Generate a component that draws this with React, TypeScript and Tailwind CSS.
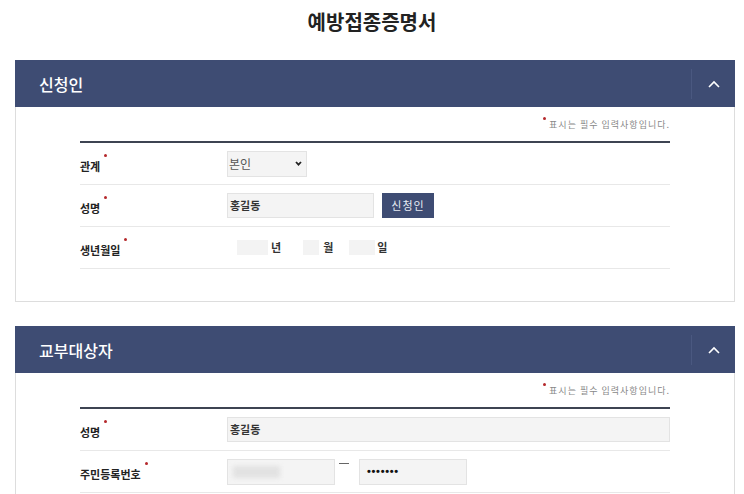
import type { ReactNode } from "react";

const font = { fontFamily: '"Noto Sans CJK KR", "Noto Sans", sans-serif' };

function ChevronUp() {
  return (
    <svg width="12" height="8" viewBox="0 0 12 8" fill="none">
      <path d="M1 7 L6 2 L11 7" stroke="#ffffff" strokeWidth="1.6" />
    </svg>
  );
}

function Required() {
  return <span className="absolute -right-[7px] -top-[4px] h-[3px] w-[3px] rounded-full bg-[#b5282b]" />;
}

function Label({ children }: { children: ReactNode }) {
  return (
    <div className="w-[147px] shrink-0">
      <span className="relative text-[11px] font-bold leading-none text-[#222]">
        {children}
        <Required />
      </span>
    </div>
  );
}

function Row({ label, children }: { label: string; children: ReactNode }) {
  return (
    <div className="flex h-[42px] items-center border-b border-[#e8e8e8]">
      <Label>{label}</Label>
      <div className="flex items-center">{children}</div>
    </div>
  );
}

function Panel({ title, children, className = "" }: { title: string; children: ReactNode; className?: string }) {
  return (
    <section className={`ml-[15px] w-[720px] ${className}`}>
      {/* Header */}
      <div className="flex h-[47px] items-center justify-between bg-[#3e4c73]">
        <h2 className="pl-[24px] text-[16px] font-medium leading-none text-white">{title}</h2>
        <button className="flex h-[30px] w-[44px] items-center justify-center border-l border-[#4a5880]">
          <ChevronUp />
        </button>
      </div>
      {/* Body */}
      <div className="border border-t-0 border-[#dddddd]">
        <div className="ml-[64px] w-[590px]">
          <div className="flex h-[34px] items-center justify-end">
            <span className="relative text-[9px] leading-none tracking-[1px] text-[#888]">
              <span className="absolute -left-[6px] -top-[3px] h-[3px] w-[3px] rounded-full bg-[#b5282b]" />
              표시는 필수 입력사항입니다.
            </span>
          </div>
          <div className="h-[2px] bg-[#3d4452]" />
          {children}
        </div>
      </div>
    </section>
  );
}

export default function App() {
  return (
    <div className="h-[494px] w-[744px] overflow-hidden bg-white" style={font}>
      <div className="flex h-[60px] justify-center">
        <h1 className="text-[20px] font-bold leading-[44px] text-[#222]">예방접종증명서</h1>
      </div>

      <Panel title="신청인">
        <Row label="관계">
          <div className="flex h-[26px] w-[80px] items-center justify-between border border-[#e3e3e3] bg-[#f4f4f4] pl-[1px] pr-[4px]">
            <span className="text-[12px] leading-none text-[#555]">본인</span>
            <svg width="7" height="5" viewBox="0 0 7 5" fill="none">
              <path d="M1 1 L3.5 3.6 L6 1" stroke="#222" strokeWidth="1.8" />
            </svg>
          </div>
        </Row>
        <Row label="성명">
          <div className="flex h-[25px] w-[147px] items-center border border-[#e3e3e3] bg-[#f4f4f4] pl-[2px]">
            <span className="text-[11px] font-bold leading-none text-[#333]">홍길동</span>
          </div>
          <button className="ml-[8px] h-[25px] w-[52px] bg-[#3e4c73] text-[11px] leading-none tracking-[1px] text-[#e8ebf3]">
            신청인
          </button>
        </Row>
        <Row label="생년월일">
          <div className="ml-[10px] h-[15px] w-[31px] bg-[#f3f3f3]" />
          <span className="ml-[3px] text-[11px] font-bold leading-none text-[#333]">년</span>
          <div className="ml-[22px] h-[15px] w-[16px] bg-[#f3f3f3]" />
          <span className="ml-[4px] text-[11px] font-bold leading-none text-[#333]">월</span>
          <div className="ml-[16px] h-[15px] w-[26px] bg-[#f3f3f3]" />
          <span className="ml-[2px] text-[11px] font-bold leading-none text-[#333]">일</span>
        </Row>
        <div className="h-[32px]" />
      </Panel>

      <Panel title="교부대상자" className="mt-[24px]">
        <Row label="성명">
          <div className="flex h-[25px] w-[443px] items-center border border-[#e3e3e3] bg-[#f4f4f4] pl-[2px]">
            <span className="text-[11px] font-bold leading-none text-[#333]">홍길동</span>
          </div>
        </Row>
        <Row label="주민등록번호">
          <div className="flex h-[26px] w-[108px] items-center border border-[#e3e3e3] bg-[#f4f4f4] pl-[5px]">
            <div className="h-[12px] w-[47px] bg-[#e2e2e2] blur-[2px]" />
          </div>
          <div className="flex h-[26px] items-start px-[4px] pt-[4px]">
            <span className="block h-[1px] w-[10px] bg-[#666]" />
          </div>
          <div className="ml-[6px] flex h-[26px] w-[108px] items-center border border-[#e3e3e3] bg-[#f4f4f4] pl-[7px]">
            <span
              className="text-[11px] font-bold leading-none tracking-[0.7px] text-[#111]"
              style={{ fontFamily: '"Liberation Sans", sans-serif' }}
            >
              •••••••
            </span>
          </div>
        </Row>
        <div className="h-[40px]" />
      </Panel>
    </div>
  );
}
